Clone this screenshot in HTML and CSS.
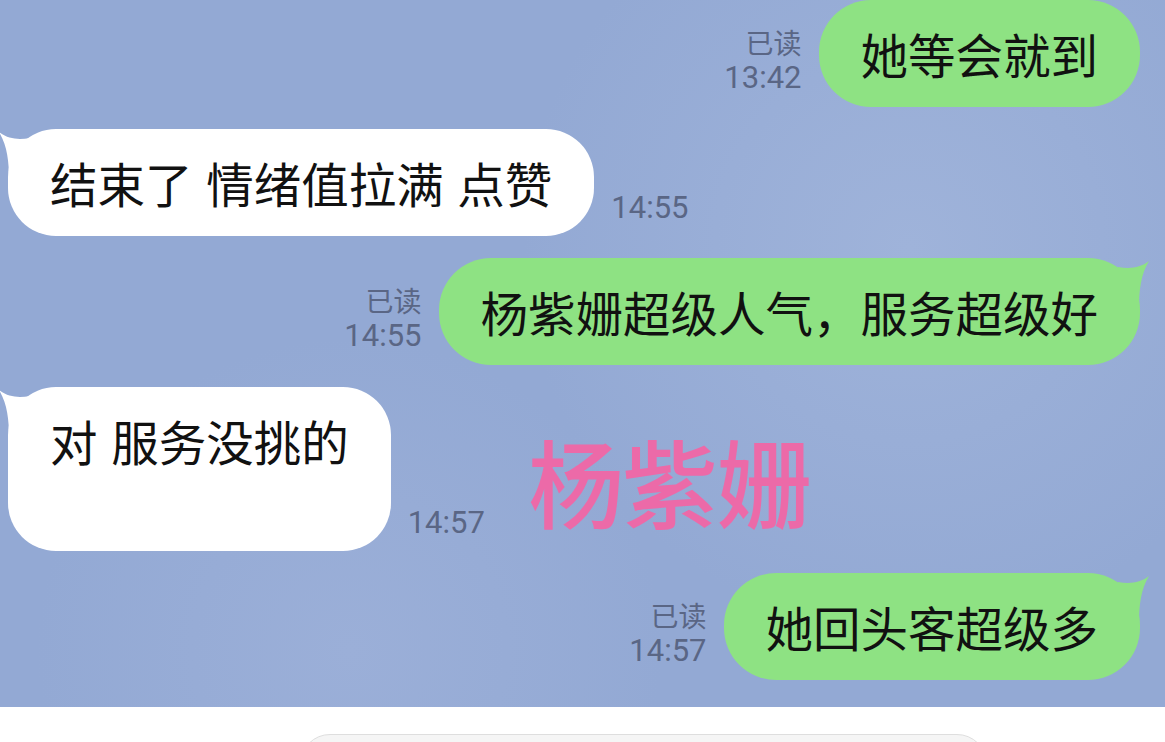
FILE: index.html
```html
<!DOCTYPE html>
<html lang="zh-CN">
<head>
<meta charset="UTF-8">
<meta name="viewport" content="width=device-width, initial-scale=1.0">
<title>聊天</title>
<link rel="stylesheet" href="styles.css">
</head>
<body>

<div class="chat">
  <div class="row sent">
    <div class="meta"><span>已读</span><span class="time">13:42</span></div>
    <div class="bubble green">她等会就到</div>
  </div>

  <div class="row received">
    <div class="bubble white">
      <svg class="tail tail-left" width="40" height="50" viewBox="0 0 40 50"><path d="M1,3 C10,10 20,11 32,9 L32,50 L11,50 C11,32 9,16 1,3 Z"/></svg>
      结束了 情绪值拉满 点赞
    </div>
    <div class="meta"><span class="time">14:55</span></div>
  </div>

  <div class="row sent">
    <div class="meta"><span>已读</span><span class="time">14:55</span></div>
    <div class="bubble green">
      <svg class="tail tail-right" width="40" height="50" viewBox="0 0 40 50"><path d="M39,3 C30,10 20,11 8,9 L8,50 L29,50 C29,32 31,16 39,3 Z"/></svg>
      杨紫姗超级人气，服务超级好
    </div>
  </div>

  <div class="row received">
    <div class="bubble white">
      <svg class="tail tail-left" width="40" height="50" viewBox="0 0 40 50"><path d="M1,3 C10,10 20,11 32,9 L32,50 L11,50 C11,32 9,16 1,3 Z"/></svg>
      对 服务没挑的<br>&nbsp;
    </div>
    <div class="meta"><span class="time">14:57</span></div>
  </div>

  <div class="row sent">
    <div class="meta"><span>已读</span><span class="time">14:57</span></div>
    <div class="bubble green">
      <svg class="tail tail-right" width="40" height="50" viewBox="0 0 40 50"><path d="M39,3 C30,10 20,11 8,9 L8,50 L29,50 C29,32 31,16 39,3 Z"/></svg>
      她回头客超级多
    </div>
  </div>

  <div class="watermark">杨紫姗</div>
</div>

<div class="footer">
  <div class="input-box"></div>
</div>

</body>
</html>
```

FILE: styles.css
```css
html, body {
  margin: 0;
  padding: 0;
}
body {
  width: 1165px;
  height: 742px;
  overflow: hidden;
  background: #fff;
  font-family: "Noto Sans CJK SC", "Noto Sans", sans-serif;
}

.chat {
  position: relative;
  box-sizing: border-box;
  display: flex;
  flex-direction: column;
  gap: 22px;
  height: 707px;
  padding: 0 25px 27px 8px;
  background: radial-gradient(circle at 78% 35%, #9fb3da 0, rgba(159,179,218,0) 38%),
              radial-gradient(circle at 30% 92%, #9bafd8 0, rgba(155,175,216,0) 30%),
              #93a9d4;
}

.row {
  display: flex;
  align-items: flex-end;
  gap: 17px;
}
.row.sent {
  justify-content: flex-end;
}
.row.received {
  justify-content: flex-start;
}

.bubble {
  position: relative;
  padding: 25px 42px;
  font-size: 47.5px;
  line-height: 57px;
  color: #111;
  border-radius: 52px;
  white-space: nowrap;
}
.bubble.green {
  background: #8ee283;
}
.bubble.white {
  background: #fff;
  border-radius: 48px;
  word-spacing: 3px;
}

.tail {
  position: absolute;
  top: 0;
}
.tail-left {
  left: -10px;
  fill: #fff;
}
.tail-right {
  right: -10px;
  fill: #8ee283;
}

.meta {
  display: flex;
  flex-direction: column;
  margin-bottom: 11px;
  font-size: 28px;
  line-height: 36px;
  color: #5a6685;
}
.sent .meta {
  align-items: flex-end;
}
.received .meta {
  margin-bottom: 10px;
}
.time {
  font-family: Roboto, "Noto Sans", sans-serif;
  font-size: 31px;
}

.watermark {
  position: absolute;
  left: 528px;
  top: 420px;
  font-size: 96px;
  line-height: 120px;
  font-weight: 500;
  color: #ec6aa8;
  letter-spacing: -2px;
}

.footer {
  box-sizing: border-box;
  height: 35px;
  overflow: hidden;
  padding: 27px 0 0 300px;
  background: #fff;
}
.input-box {
  width: 685px;
  height: 60px;
  border: 1px solid #dedede;
  border-radius: 30px;
  background: #f5f5f5;
}
```
